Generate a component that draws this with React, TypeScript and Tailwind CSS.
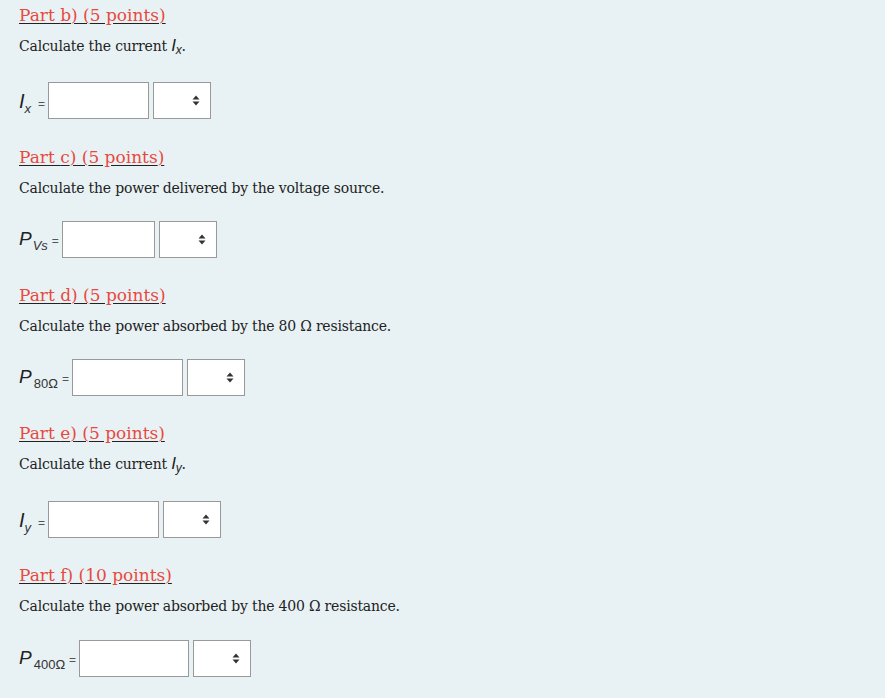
const parts = [
  { id: "b", pts: "5 points", q: "current", sym: "I", sub: "x", inputW: "w-[101px]", h: "h-[142px]", rowMt: "mt-[24px]" },
  { id: "c", pts: "5 points", q: "vs", sym: "P", sub: "Vs", inputW: "w-[93px]", h: "h-[138px]", rowMt: "mt-[21px]" },
  { id: "d", pts: "5 points", q: "80", sym: "P", sub: "80Ω", inputW: "w-[111px]", h: "h-[138px]", rowMt: "mt-[21px]" },
  { id: "e", pts: "5 points", q: "current", sym: "I", sub: "y", inputW: "w-[111px]", h: "h-[142px]", rowMt: "mt-[25px]" },
  { id: "f", pts: "10 points", q: "400", sym: "P", sub: "400Ω", inputW: "w-[110px]", h: "h-[123px]", rowMt: "mt-[22px]" },
];

function Question({ q, sub }: { q: string; sub: string }) {
  if (q === "current")
    return (
      <>
        Calculate the current{" "}
        <span className="font-['Liberation_Sans',sans-serif] text-[17px] italic">I</span>
        <sub className="font-['Liberation_Sans',sans-serif] text-[12px] italic">{sub}</sub>.
      </>
    );
  if (q === "vs") return <>Calculate the power delivered by the voltage source.</>;
  return <>Calculate the power absorbed by the {q} Ω resistance.</>;
}

function SortArrows() {
  return (
    <svg width="8" height="11" viewBox="0 0 8 11" className="fill-[#333]">
      <path d="M4 0.5 L7.5 4.5 H0.5 Z" />
      <path d="M4 10.5 L7.5 6.5 H0.5 Z" />
    </svg>
  );
}

export default function App() {
  return (
    <div className="min-h-[698px] w-[885px] bg-[#e8f2f5] pl-[19px] pt-[1px] font-['DejaVu_Serif',serif] text-[#222]">
      {parts.map((p) => (
        <section key={p.id} className={`${p.h} pt-[2px]`}>
          <h3 className="text-[17px] leading-[24px] text-[#e8493f] underline decoration-[#222] underline-offset-[2px]">
            Part {p.id}) ({p.pts})
          </h3>
          <p className="mt-[7px] text-[14px] leading-[24px] tracking-[-0.2px]">
            <Question q={p.q} sub={p.sub} />
          </p>
          <div className={`${p.rowMt} flex items-center font-['Liberation_Sans',sans-serif]`}>
            <span className="flex items-baseline">
              <span className={`${p.sym === "I" ? "text-[20px]" : "text-[19px]"} italic text-[#222]`}>{p.sym}</span>
              <span className={`relative top-[5px] text-[13px] text-[#333] ${p.sym === "I" ? "italic" : p.sub === "Vs" ? "italic pl-[1px]" : "pl-[2px]"}`}>{p.sub}</span>
              <span className={`${p.sym === "I" ? "ml-[7px]" : "ml-[4px]"} text-[12px] text-[#555]`}>=</span>
            </span>
            <div className={`ml-[3px] h-[37px] ${p.inputW} border border-[#999] bg-white`} />
            <div className="ml-[4px] flex h-[37px] w-[58px] items-center justify-end border border-[#999] bg-white pr-[10px]">
              <SortArrows />
            </div>
          </div>
        </section>
      ))}
    </div>
  );
}
